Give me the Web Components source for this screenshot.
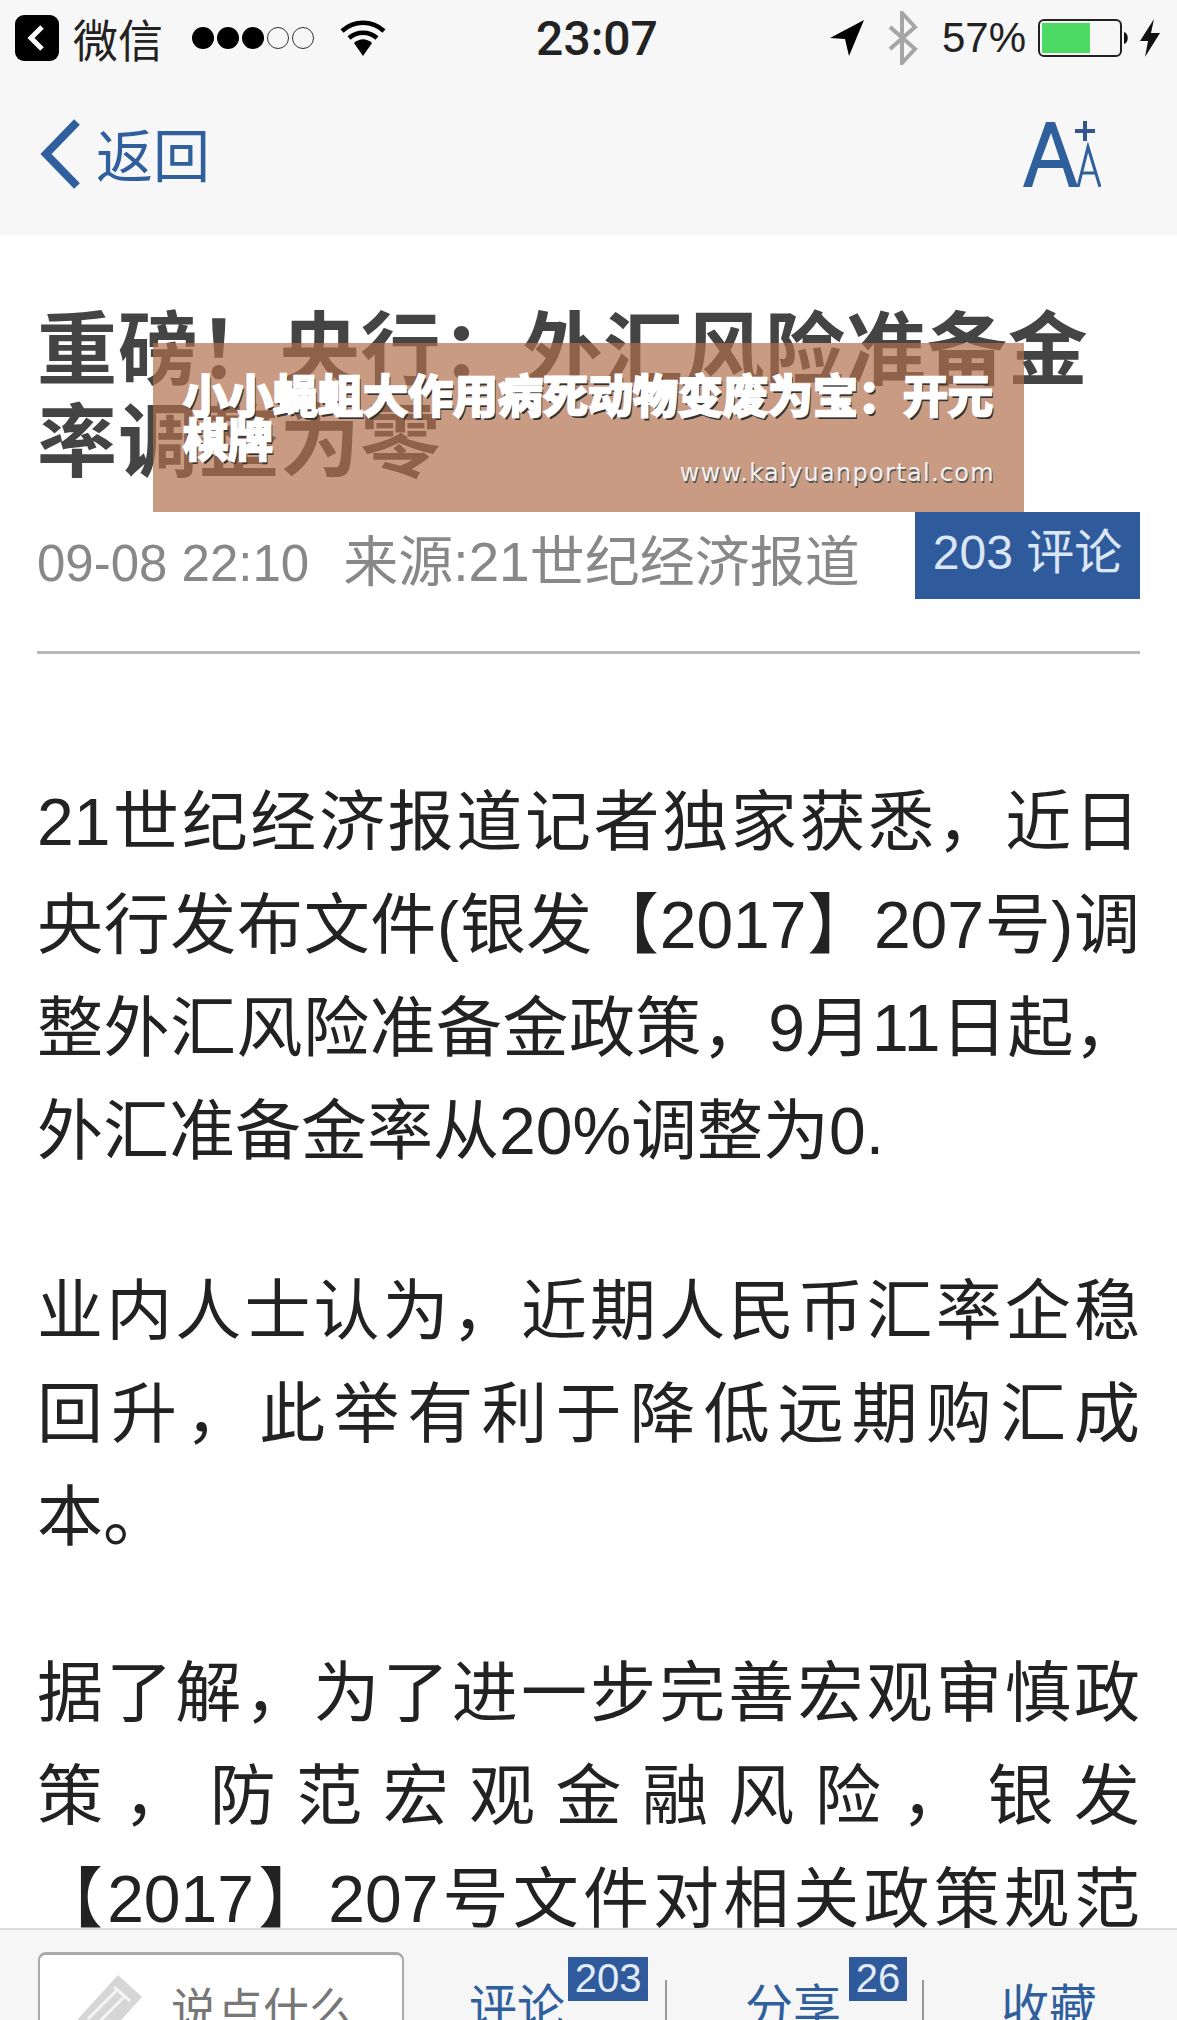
<!doctype html>
<html lang="zh">
<head>
<meta charset="utf-8">
<title>小小蝇蛆大作用病死动物变废为宝：开元棋牌</title>
<style>
  html, body { margin: 0; padding: 0; background: #fff; }
  body { font-family: "Liberation Sans", "Noto Sans CJK SC", sans-serif; }
</style>
</head>
<body>
<phone-page>
  <status-bar></status-bar>
  <nav-bar></nav-bar>
  <news-article>
    <span slot="title">重磅！央行：外汇风险准备金率调整为零</span>
    <span slot="time">09-08 22:10</span>
    <span slot="source">来源:21世纪经济报道</span>
    <span slot="count">203 评论</span>
    <p>
      <body-line>21世纪经济报道记者独家获悉，近日</body-line>
      <body-line>央行发布文件(银发【2017】207号)调</body-line>
      <body-line>整外汇风险准备金政策，9月11日起，</body-line>
      外汇准备金率从20%调整为0.
    </p>
    <p class="tight">
      <body-line>业内人士认为，近期人民币汇率企稳</body-line>
      <body-line>回升，此举有利于降低远期购汇成</body-line>
      本。
    </p>
    <p>
      <body-line>据了解，为了进一步完善宏观审慎政</body-line>
      <body-line>策，防范宏观金融风险，银发</body-line>
      <body-line>【2017】207号文件对相关政策规范</body-line>
    </p>
  </news-article>
  <tool-bar></tool-bar>
  <promo-banner>
    <span slot="headline">小小蝇蛆大作用病死动物变废为宝：开元棋牌</span>
    <span slot="url">www.kaiyuanportal.com</span>
  </promo-banner>
</phone-page>

<script>
// each element keeps its markup and style in an open shadow root
function define(tag, html) {
  customElements.define(tag, class extends HTMLElement {
    constructor() {
      super();
      this.attachShadow({ mode: 'open' }).innerHTML = html;
    }
  });
}

define('phone-page', `
<style>
  :host { display: flex; flex-direction: column; position: relative; width: 1177px; height: 2020px; overflow: hidden; background: #fff; }
</style>
<slot></slot>`);

define('status-bar', `
<style>
  :host { display: flex; align-items: center; height: 76px; padding: 0 16px 0 15px; background: #f7f7f7; color: #111; font-size: 42px; }
  .left, .right { flex: 1 1 0; display: flex; align-items: center; }
  .right { justify-content: flex-end; }
  .app { font-size: 45px; margin-left: 14px; color: #222; }
  .dots { display: flex; gap: 3px; margin-left: 29px; }
  .dots i { width: 22px; height: 22px; border-radius: 50%; background: #000; box-sizing: border-box; }
  .dots i.off { background: none; border: 1.5px solid #333; }
  .time { font-family: Roboto, sans-serif; font-weight: 500; font-size: 48px; color: #222; margin-left: 18px; }
  .pct { font-size: 42px; color: #222; margin: 0 12px 0 24px; }
  svg { display: block; }
</style>
<div class="left">
  <svg width="44" height="46" viewBox="0 0 44 46"><rect width="44" height="46" rx="9" fill="#000"/><path d="M27 12 L16 23 L27 34" fill="none" stroke="#fff" stroke-width="5"/></svg>
  <span class="app">微信</span>
  <div class="dots"><i></i><i></i><i></i><i class="off"></i><i class="off"></i></div>
  <svg style="margin-left:26px" width="46" height="36" viewBox="0 0 46 36"><path d="M2 11 C14 0 32 0 44 11 M9 18 C17 11 29 11 37 18" fill="none" stroke="#000" stroke-width="4.5"/><path d="M14 23 C20 18 26 18 32 23 L23 36 Z" fill="#000"/></svg>
</div>
<div class="time">23:07</div>
<div class="right">
  <svg width="34" height="36" viewBox="0 0 34 36"><path d="M34 0 L0 18 L15 19 L19 36 Z" fill="#000"/></svg>
  <svg style="margin-left:24px" width="30" height="54" viewBox="0 0 30 54"><path d="M2 38 L27 16 L14 2 V52 L27 38 L2 16" fill="none" stroke="#a6a6a6" stroke-width="4"/></svg>
  <span class="pct">57%</span>
  <svg width="92" height="38" viewBox="0 0 92 38"><rect x="1" y="1" width="82" height="36" rx="5" fill="none" stroke="#222" stroke-width="2"/><rect x="4" y="4" width="48" height="30" fill="#4cd964"/><path d="M86 13 C91 14 91 24 86 25 Z" fill="#111"/></svg>
  <svg style="margin-left:9px" width="22" height="38" viewBox="0 0 22 38"><path d="M15 0 L1 22 L9 22 L6 38 L21 14 L12 14 Z" fill="#111"/></svg>
</div>`);

define('nav-bar', `
<style>
  :host { display: flex; align-items: center; justify-content: space-between; height: 159px; padding: 0 76px 3px 40px; background: #f7f7f7; color: #2f5f9c; box-sizing: border-box; }
  .back { display: flex; align-items: center; font-size: 57px; }
  .back span { position: relative; top: -2px; }
  svg { display: block; }
  .back svg { margin-right: 16px; }
</style>
<div class="back">
  <svg width="40" height="70" viewBox="0 0 40 70"><path d="M37 3 L6 35 L37 67" fill="none" stroke="#2f5f9c" stroke-width="8"/></svg>
  <span>返回</span>
</div>
<svg width="78" height="66" viewBox="0 0 78 66" aria-label="字号"><path d="M0 66 L23 1 H32 L55 66 H46 L40 47 H15 L9 66 Z M18 39 H37 L28 12 Z" fill="#2f5f9c"/><path d="M62 0 V20 M52 10 H72" stroke="#34558f" stroke-width="4" fill="none"/><path d="M55 66 L65 26 L77 66 M59 52 H73" stroke="#2f5f9c" stroke-width="3" fill="none"/></svg>`);

define('news-article', `
<style>
  :host { display: block; flex: 1 1 0; min-height: 0; overflow: hidden; padding: 0 37px; color: #222; }
  h1 { margin: 70px 0 0; font-size: 80px; line-height: 92px; font-weight: 700; color: #444; letter-spacing: .9px; }
  .meta { display: flex; align-items: flex-start; justify-content: space-between; margin-top: 23px; height: 87px; }
  .info { color: #888; line-height: 70px; margin-top: 15px; display: flex; align-items: baseline; gap: 34px; white-space: nowrap; }
  .time { font-size: 51px; }
  .source { font-size: 55px; }
  .count { width: 225px; height: 87px; background: #2f5a9c; color: #dbe6f4; font-size: 48px; line-height: 82px; text-align: center; }
  hr { border: 0; height: 3px; background: #b9b9b9; margin: 52px 0 0; }
  .body { padding-top: 117px; }
  ::slotted(p) { margin: 0 0 77px; font-size: 66px; line-height: 103px; color: #222; }
  ::slotted(p.tight) { margin-bottom: 73px; }
</style>
<h1><slot name="title"></slot></h1>
<div class="meta">
  <div class="info"><span class="time"><slot name="time"></slot></span><span class="source"><slot name="source"></slot></span></div>
  <div class="count"><slot name="count"></slot></div>
</div>
<hr>
<div class="body"><slot></slot></div>`);

// one justified line of the article, breaks follow the screenshot
define('body-line', `
<style>
  :host { display: block; text-align: justify; text-align-last: justify; }
</style>
<slot></slot>`);

define('tool-bar', `
<style>
  :host { display: flex; align-items: flex-start; flex: 0 0 92px; box-sizing: border-box; height: 92px; overflow: hidden; background: #f6f6f6; border-top: 2px solid #dcdcdc; padding: 22px 0 0 38px; color: #2f5f9c; font-size: 48px; }
  .input { display: flex; align-items: flex-start; gap: 27px; box-sizing: border-box; width: 366px; height: 100px; padding: 18px 0 0 34px; background: #fff; border: 2px solid #aaa; border-top-width: 3px; border-radius: 8px; color: #777; font-size: 46px; }
  .item { display: flex; }
  .label { line-height: 60px; margin-top: 26px; white-space: nowrap; }
  .badge { box-sizing: border-box; height: 44px; margin-top: 5px; background: #2f5a9c; color: #e3ecf7; font-size: 40px; line-height: 42px; text-align: center; }
  .sep { width: 2px; height: 60px; background: #999; margin-top: 28px; }
</style>
<div class="input">
  <svg width="70" height="70" viewBox="0 0 70 70"><path d="M4 46 L44 2 L68 24 L28 68 L2 70 Z" fill="#d6d6d6"/><path d="M40 14 L56 28 M14 46 L42 18 M22 52 L50 24" fill="none" stroke="#f4f4f4" stroke-width="3"/></svg>
  <span>说点什么</span>
</div>
<div class="item" style="margin-left:65px"><span class="label">评论</span><span class="badge" style="width:80px;margin-left:3px">203</span></div>
<div class="sep" style="margin-left:17px"></div>
<div class="item" style="margin-left:78px"><span class="label">分享</span><span class="badge" style="width:58px;margin-left:8px">26</span></div>
<div class="sep" style="margin-left:15px"></div>
<div class="item" style="margin-left:77px"><span class="label">收藏</span></div>`);

// banner sits over the article title, as in the reference
define('promo-banner', `
<style>
  :host { position: absolute; left: 153px; top: 343px; width: 871px; height: 169px; box-sizing: border-box; padding: 33px 30px 0 30px; background: rgba(177,110,74,.69); color: #fff; }
  .headline { font-size: 45px; line-height: 44px; font-weight: 700; -webkit-text-stroke: 2.4px #fff; text-shadow: 2px 3px 0 #333; }
  .url { position: absolute; right: 29px; bottom: 24px; font-family: "DejaVu Sans", sans-serif; font-size: 24px; line-height: 30px; letter-spacing: 1.3px; color: #f2f2f2; text-shadow: 1px 2px 0 #555; }
</style>
<div class="headline"><slot name="headline"></slot></div>
<div class="url"><slot name="url"></slot></div>`);
</script>
</body>
</html>
